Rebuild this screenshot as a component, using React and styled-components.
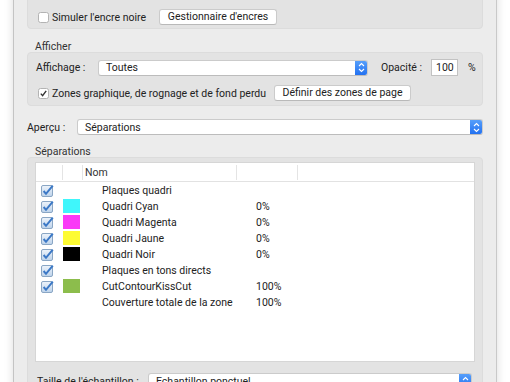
import React from "react"
import styled, { createGlobalStyle } from "styled-components"

const Global = createGlobalStyle`
  html, body {
    margin: 0;
    padding: 0;
    background: #ffffff;
    overflow: hidden;
  }
  body {
    font-family: Roboto, "Liberation Sans", Arial, sans-serif;
    font-size: 10.5px;
    color: #262626;
  }
`

const Page = styled.div`
  height: 382px;
  overflow: hidden;
`

const Window = styled.div`
  margin-left: 13px;
  width: 484px;
  height: 400px;
  background: #ececec;
  border-left: 1px solid #c4c4c4;
  border-right: 1px solid #c9c9c9;
  box-shadow: 0 0 9px rgba(0, 0, 0, 0.14);
  padding: 0 13px;
  box-sizing: border-box;
`

const Group = styled.div`
  background: #e3e3e3;
  border: 1px solid #dcdcdc;
  border-radius: 4px;
  box-sizing: border-box;
  height: ${p => p.h}px;
  margin-top: ${p => p.mt || 0}px;
  padding: ${p => p.pad || "0 8px"};
`

const Row = styled.div`
  display: flex;
  align-items: center;
  height: ${p => p.h || 16}px;
  margin-top: ${p => p.mt || 0}px;
  padding-left: ${p => p.pl || 0}px;
`

const GroupTitle = styled.div`
  height: 11px;
  line-height: 11px;
  margin-top: ${p => p.mt}px;
  padding-left: 8px;
  color: #333;
`

const Label = styled.span`
  width: ${p => (p.w ? `${p.w}px` : "auto")};
  margin-left: ${p => p.ml || 0}px;
  flex-shrink: 0;
  white-space: nowrap;
  color: #222;
`

const Button = styled.button`
  font: inherit;
  color: #222;
  height: 16px;
  width: ${p => p.w}px;
  margin-left: ${p => p.ml || 0}px;
  padding: 0;
  background: #fff;
  border: 1px solid #cbcbcb;
  border-bottom-color: #b9b9b9;
  border-radius: 3px;
  box-sizing: border-box;
  line-height: 14px;
  text-align: center;
  flex-shrink: 0;
`

const SelectBox = styled.div`
  position: relative;
  display: flex;
  align-items: center;
  height: 16px;
  width: ${p => (p.w ? `${p.w}px` : "auto")};
  flex: ${p => (p.w ? "none" : 1)};
  margin-right: ${p => p.mr || 0}px;
  background: #fff;
  border: 1px solid #cbcbcb;
  border-bottom-color: #bcbcbc;
  border-radius: 3px;
  box-sizing: border-box;
  padding-left: 7px;
  color: #222;
  overflow: hidden;
`

const Stepper = styled.span`
  position: absolute;
  top: -1px;
  right: -1px;
  width: 13px;
  height: 16px;
  border-radius: 0 3px 3px 0;
  background: linear-gradient(#5aa2fb, #1f6ef0);
  display: flex;
  align-items: center;
  justify-content: center;
`

const NumberInput = styled.div`
  width: 27px;
  height: 17px;
  margin-left: ${p => p.ml}px;
  background: #fff;
  border: 1px solid #c2c2c2;
  box-sizing: border-box;
  padding-left: 4px;
  line-height: 15px;
  color: #222;
  flex-shrink: 0;
`

const Table = styled.div`
  height: 200px;
  background: #fff;
  border: 1px solid #d6d6d6;
  box-sizing: border-box;
`

const Cols = styled.div`
  display: grid;
  grid-template-columns: 27px 20px 154px 61px 1fr;
  align-items: center;
  height: ${p => p.h}px;
  border-bottom: ${p => (p.head ? "1px solid #e2e2e2" : "none")};
  box-sizing: border-box;
`

const HeadCell = styled.div`
  height: 15px;
  line-height: 15px;
  padding-left: 2px;
  border-right: ${p => (p.last ? "none" : "1px solid #e4e4e4")};
  color: #333;
`

const Cell = styled.div`
  display: flex;
  align-items: center;
  padding-left: ${p => p.pl || 0}px;
  white-space: nowrap;
  color: #222;
`

const Swatch = styled.span`
  width: 17px;
  height: 14px;
  background: ${p => p.c};
`

const StepperIcon = () => (
  <svg width="7" height="11" viewBox="0 0 7 11">
    <path d="M1 4 L3.5 1.5 L6 4 M1 7 L3.5 9.5 L6 7" fill="none" stroke="#fff" strokeWidth="1.1" />
  </svg>
)

const Select = ({ value, w, mr }) => (
  <SelectBox w={w} mr={mr}>
    {value}
    <Stepper>
      <StepperIcon />
    </Stepper>
  </SelectBox>
)

const CheckBox = ({ checked, ml = 2 }) => (
  <svg width="11" height="11" viewBox="0 0 11 11" style={{ marginLeft: ml, marginRight: 3, flexShrink: 0 }}>
    <rect x="0.5" y="0.5" width="10" height="10" rx="2" fill="#fff" stroke="#b3b3b3" />
    {checked && <path d="M2.8 5.6 L4.6 7.6 L8.2 2.8" fill="none" stroke="#333" strokeWidth="1.4" />}
  </svg>
)

const BlueCheck = () => (
  <svg width="13" height="13" viewBox="0 0 13 13" style={{ marginLeft: 5 }}>
    <defs>
      <linearGradient id="bc" x1="0" y1="0" x2="0" y2="1">
        <stop offset="0" stopColor="#eef4fb" />
        <stop offset="1" stopColor="#bcd2ea" />
      </linearGradient>
    </defs>
    <rect x="0.5" y="1.5" width="11" height="11" rx="1.5" fill="url(#bc)" stroke="#8aa6c4" />
    <path d="M2.6 7 L5 9.8 L11.8 1.6" fill="none" stroke="#3b78c6" strokeWidth="2" />
  </svg>
)

const rows = [
  { name: "Plaques quadri" },
  { name: "Quadri Cyan", color: "#3ff6fb", pct: "0%" },
  { name: "Quadri Magenta", color: "#fa3af7", pct: "0%" },
  { name: "Quadri Jaune", color: "#fdfb34", pct: "0%" },
  { name: "Quadri Noir", color: "#000000", pct: "0%" },
  { name: "Plaques en tons directs" },
  { name: "CutContourKissCut", color: "#8cbd4c", pct: "100%" },
  { name: "Couverture totale de la zone", pct: "100%", nocheck: true },
]

export default function App() {
  return (
    <Page>
      <Global />
      <Window>
        <Group h={40} mt={-11} pad="14px 8px 0">
          <Row h={26}>
            <CheckBox />
            <Label w={107}>Simuler l'encre noire</Label>
            <Button w={118}>Gestionnaire d'encres</Button>
          </Row>
        </Group>

        <GroupTitle mt={12}>Afficher</GroupTitle>
        <Group h={54}>
          <Row h={17} mt={6}>
            <Label w={62}>Affichage :</Label>
            <Select value="Toutes" w={270} />
            <Label w={50} ml={13}>Opacité :</Label>
            <NumberInput>100</NumberInput>
            <Label ml={10}>%</Label>
          </Row>
          <Row mt={9}>
            <CheckBox checked />
            <Label w={222}>Zones graphique, de rognage et de fond perdu</Label>
            <Button w={137}>Définir des zones de page</Button>
          </Row>
        </Group>

        <Row mt={13}>
          <Label w={50}>Aperçu :</Label>
          <Select value="Séparations" />
        </Row>

        <GroupTitle mt={11}>Séparations</GroupTitle>
        <Group h={240} pad="4px 7px 0">
          <Table>
            <Cols head h={19}>
              <HeadCell />
              <HeadCell />
              <HeadCell>Nom</HeadCell>
              <HeadCell />
              <HeadCell last />
            </Cols>
            {rows.map(r => (
              <Cols key={r.name} h={16}>
                <Cell>{!r.nocheck && <BlueCheck />}</Cell>
                <Cell>{r.color && <Swatch c={r.color} />}</Cell>
                <Cell pl={19}>{r.name}</Cell>
                <Cell pl={19}>{r.pct}</Cell>
                <Cell />
              </Cols>
            ))}
          </Table>
          <Row mt={11} pl={2}>
            <Label w={111}>Taille de l'échantillon :</Label>
            <Select value="Echantillon ponctuel" mr={3} />
          </Row>
        </Group>
      </Window>
    </Page>
  )
}
